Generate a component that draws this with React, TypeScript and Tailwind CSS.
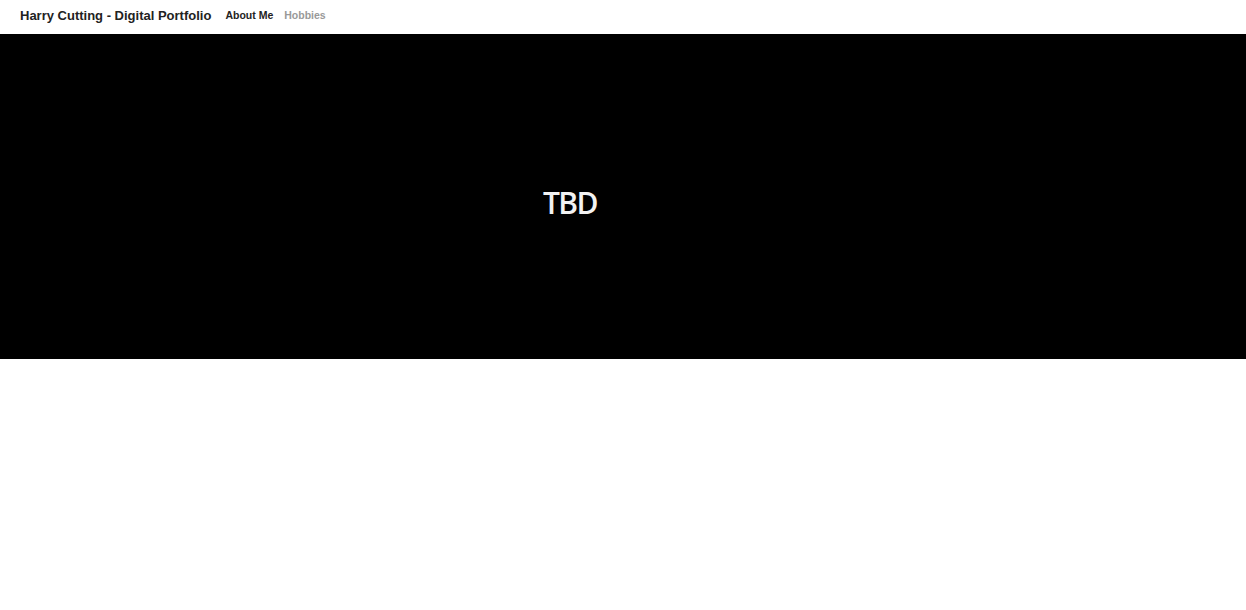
export default function App() {
  return (
    <div className="min-h-[610px] bg-white font-['Liberation_Sans',Arial,sans-serif]">
      {/* Navbar */}
      <nav className="h-[34px] flex items-center px-5 pb-[3px]">
        <span className="text-[13px] font-bold text-[#222] mr-[14px]">Harry Cutting - Digital Portfolio</span>
        <div className="flex items-center gap-[11px] text-[10.5px] font-bold">
          <a className="text-[#222]">About Me</a>
          <a className="text-[#999]">Hobbies</a>
        </div>
      </nav>

      {/* Banner */}
      <div className="h-[325px] bg-black">
        <div className="w-[1140px] h-full flex items-center justify-center pt-[12px]">
          <span className="font-['Open_Sans',sans-serif] font-semibold text-[30px] text-[#f2f2f2] tracking-[-1.5px] leading-none">TBD</span>
        </div>
      </div>
    </div>
  );
}
